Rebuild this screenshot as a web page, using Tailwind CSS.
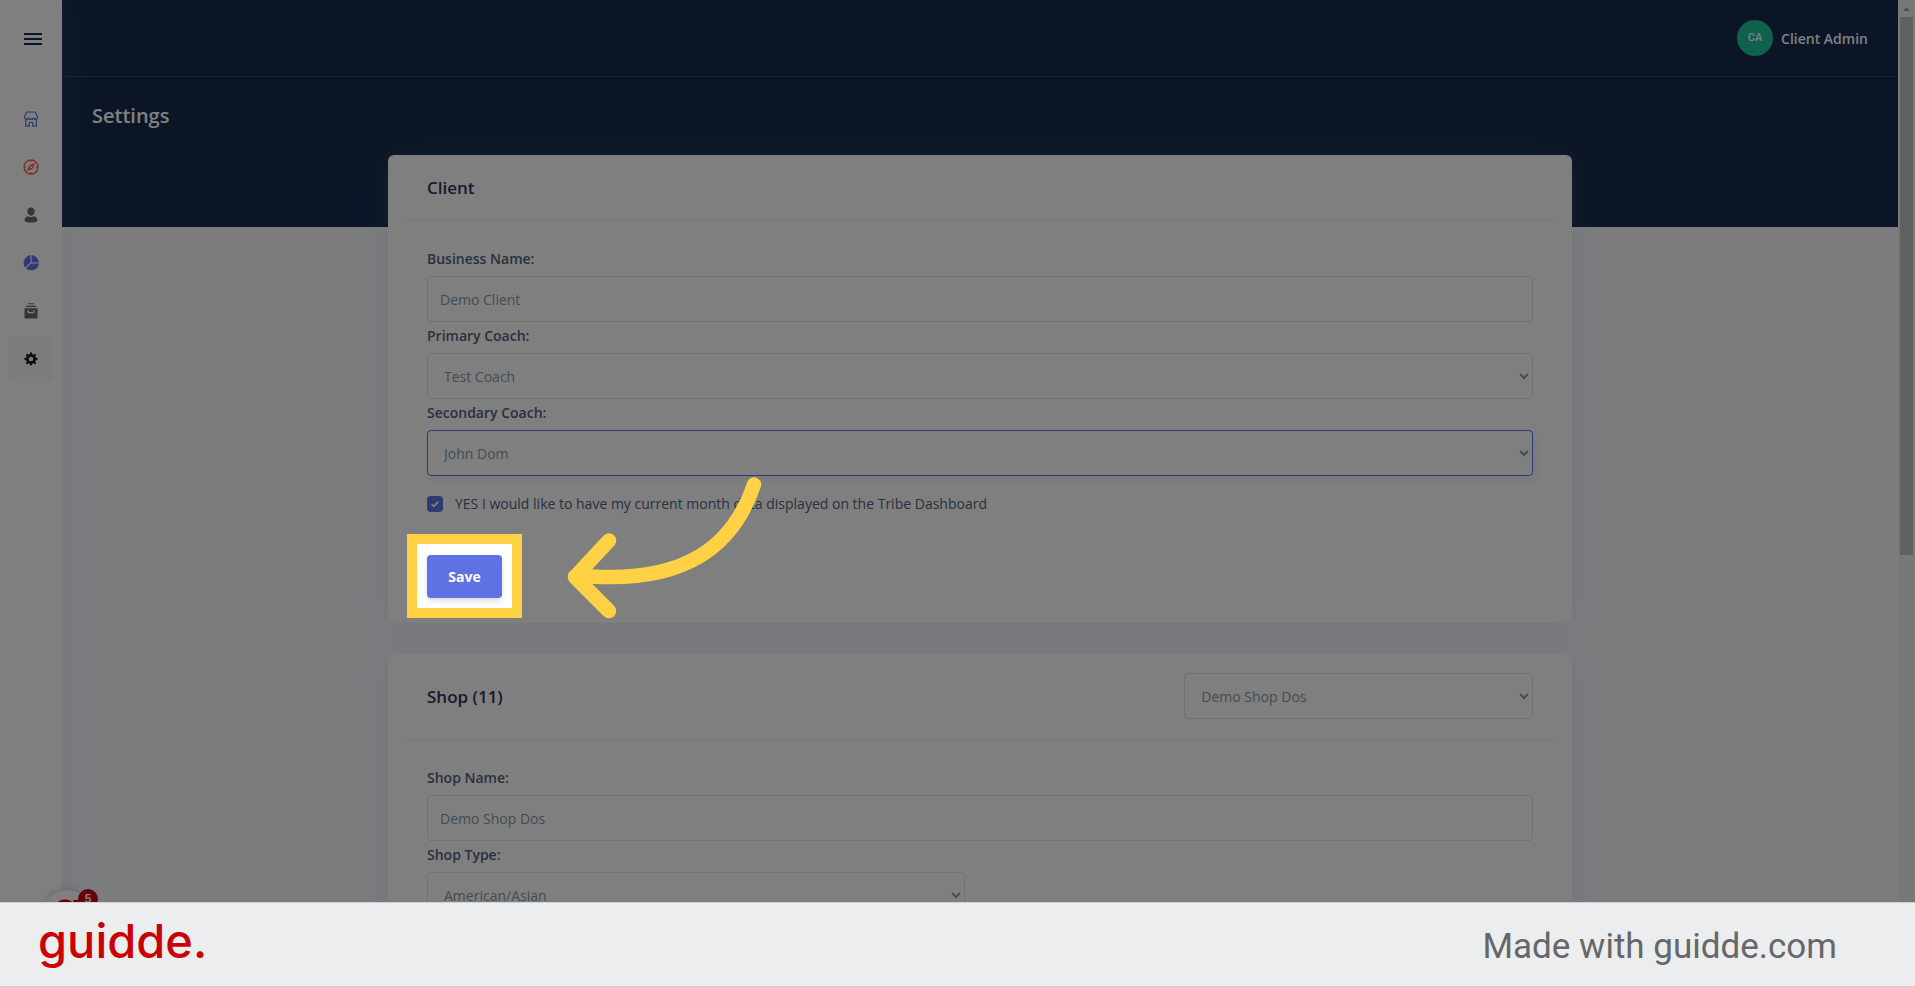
<!DOCTYPE html>
<html lang="en">
<head>
<meta charset="utf-8">
<meta name="viewport" content="width=device-width, initial-scale=1">
<title>Settings</title>
<script src="https://cdn.jsdelivr.net/npm/@tailwindcss/browser@4"></script>
</head>
<body class="relative h-screen overflow-hidden bg-[#f8f9fe] font-['Open_Sans',sans-serif] text-sm text-[#525f7f]">
<div class="flex h-full">

  <!-- Sidebar -->
  <nav aria-label="Main" class="z-10 flex w-[62px] shrink-0 flex-col bg-white px-2 shadow-[0_0_32px_0_rgba(136,152,170,0.15)]">
    <button type="button" aria-label="Toggle menu" class="mt-[33px] mb-[51px] ml-4 flex w-[18px] flex-col gap-[3px]">
      <span class="h-0.5 w-full bg-[#172b4d]"></span><span class="h-0.5 w-full bg-[#172b4d]"></span><span class="h-0.5 w-full bg-[#172b4d]"></span>
    </button>
    <div class="flex w-[46px] flex-col gap-0.5">
      <a href="#" aria-label="Shops" class="grid h-[46px] place-items-center rounded-md text-[#5e72e4]">
        <svg class="size-4" viewBox="0 0 16 16" fill="none" stroke="currentColor" stroke-width="1.2" stroke-linejoin="round"><path d="M3.700 1h8.600L14.400 5.500v1.200c0 1-.6 1.500-1.300 1.500s-1.300-.6-1.300-1.100c0 .5-.5 1.100-1.300 1.100s-1.200-.6-1.200-1.100c0 .5-.6 1.100-1.300 1.100s-1.300-.6-1.300-1.100c0 .5-.5 1.100-1.200 1.100s-1.300-.6-1.300-1.100c0 .5-.6 1.100-1.300 1.100s-1.300-.5-1.300-1.500V5.500z"/><path d="M2.700 8.200v6.900h3.600v-3.600h3.400v3.600h3.600V8.200"/></svg>
      </a>
      <a href="#" aria-label="Explore" class="grid h-[46px] place-items-center rounded-md text-[#fb6340]">
        <svg class="size-4" viewBox="0 0 16 16" fill="none" stroke="currentColor" stroke-width="1.3"><circle cx="8" cy="8" r="7"/><path d="M8 1v2M8 13v2M1 8h2M13 8h2"/><path fill="currentColor" fill-rule="evenodd" stroke="none" d="M12.300 3.700 9.700 9.700l-6 2.600 2.600-6zM8 7a1 1 0 1 0 0 2 1 1 0 0 0 0-2z"/></svg>
      </a>
      <a href="#" aria-label="Users" class="grid h-[46px] place-items-center rounded-md text-[#6a6a6a]">
        <svg class="size-4" viewBox="0 0 16 16" fill="currentColor"><path d="M8 .5c2.200 0 3.700 1.600 3.700 3.800S10.100 8.800 8 8.800 4.300 6.500 4.300 4.300 5.800.5 8 .5zM5.300 9.200c.8.6 1.700.9 2.700.9s1.900-.3 2.700-.9c2.300.4 3.700 1.900 3.700 4.100 0 1.500-2.800 2.300-6.400 2.300s-6.400-.8-6.400-2.300c0-2.200 1.400-3.700 3.700-4.100z"/></svg>
      </a>
      <a href="#" aria-label="Reports" class="grid h-[46px] place-items-center rounded-md text-[#5e72e4]">
        <svg class="size-4" viewBox="0 0 16 16" fill="currentColor"><path d="M7.400.1v7.400l-5.200 5.200A8 8 0 0 1 7.400.1zM8.600.1a8 8 0 0 1 7.300 7.300H8.600zM15.900 8.600A8 8 0 0 1 3 13.600l5-5z"/></svg>
      </a>
      <a href="#" aria-label="Archive" class="grid h-[46px] place-items-center rounded-md text-[#6a6a6a]">
        <svg class="size-4" viewBox="0 0 16 16" fill="currentColor"><path d="M5 .2h6v1.100H5zM3 2.700h10v1.200H3z"/><path fill-rule="evenodd" d="M1.500 5.200h13v9.600c0 .5-.3.800-.8.800H2.300c-.5 0-.8-.3-.8-.8zM4.500 7.100V9c0 .8.400 1.200 1.200 1.200h4.600c.8 0 1.200-.4 1.200-1.200V7.100h-1.300V9H5.800V7.100z"/></svg>
      </a>
      <a href="#" aria-label="Settings" aria-current="page" class="grid h-[46px] place-items-center rounded-md bg-[#f6f9fc] text-[#1c1c1c]">
        <svg class="size-[14px]" viewBox="0 0 16 16" fill="none" stroke="currentColor"><circle cx="8" cy="8" r="4.100" stroke-width="3"/><path stroke-width="2.600" stroke-linecap="round" d="M8 1.600v1.200M8 13.200v1.200M1.600 8h1.200M13.200 8h1.200M3.500 3.500l.8.8M11.700 11.700l.8.8M3.500 12.500l.8-.8M11.700 4.300l.8-.8"/></svg>
      </a>
    </div>
  </nav>

  <!-- Page -->
  <div class="min-w-0 flex-1">
    <header class="h-[227px] bg-[#172b4d]">
      <div class="flex h-[77px] items-center justify-end gap-2 border-b border-white/10 px-[30px]">
        <span class="grid size-9 place-items-center rounded-full bg-[#1fc29d] font-[Roboto,sans-serif] text-[11px] font-medium text-white">CA</span>
        <span class="pt-0.5 font-semibold text-white">Client Admin</span>
      </div>
      <h1 class="px-[30px] pt-6 text-xl leading-[30px] font-semibold text-white">Settings</h1>
    </header>

    <main class="-mt-[72px] px-[30px]">
      <div class="mx-auto flex w-2/3 flex-col gap-[30px]">
        <section class="rounded-md bg-white px-[15px] shadow-[0_0_32px_0_rgba(136,152,170,0.15)]">
          <div class="border-b border-black/5 px-6 py-5">
            <h2 class="text-[17px] leading-[25px] font-semibold text-[#32325d]">Client</h2>
          </div>
          <form class="px-6 pt-6 pb-[25px]" onsubmit="return false">
            <label for="business" class="mb-[3px] block leading-7 font-semibold">Business Name:</label>
            <input id="business" type="text" value="Demo Client" class="block h-[46px] w-full rounded border border-[#dee2e6] bg-white px-3 text-[#8898aa]">
            <label for="primary" class="mb-[3px] block leading-7 font-semibold">Primary Coach:</label>
            <select id="primary" class="block h-[46px] w-full rounded border border-[#dee2e6] bg-white px-3 text-[#8898aa]"><option>Test Coach</option></select>
            <label for="secondary" class="mb-[3px] block leading-7 font-semibold">Secondary Coach:</label>
            <select id="secondary" class="block h-[46px] w-full rounded border border-[#5e72e4] bg-white px-3 text-[#8898aa] shadow-[3px_4px_8px_rgba(94,114,228,0.1)]"><option>John Dom</option></select>
            <div class="mt-4 flex items-center gap-3">
              <span class="grid size-4 place-items-center">
                <input id="tribe" type="checkbox" checked class="col-start-1 row-start-1 size-4 appearance-none rounded bg-[#5e72e4]">
                <svg class="pointer-events-none col-start-1 row-start-1 size-2" viewBox="0 0 8 8" fill="none" stroke="#fff" stroke-width="1.800"><path d="M.7 4.200 2.900 6.300 7.300 1.700"/></svg>
              </span>
              <label for="tribe" class="leading-6">YES I would like to have my current month data displayed on the Tribe Dashboard</label>
            </div>
            <div class="relative mt-[39px] w-fit">
              <button type="submit" class="block h-[43px] w-[75px] rounded bg-[#5e72e4] font-bold text-white shadow-[0_4px_6px_rgba(50,50,93,0.11),0_1px_3px_rgba(0,0,0,0.08)]">Save</button>
              <!-- Spotlight: the shadow dims everything outside the frame -->
              <div class="pointer-events-none absolute -inset-x-5 -top-[21px] -bottom-5 z-40 border-10 border-[#ffd144] shadow-[0_0_0_2400px_rgba(0,0,0,0.5)]"></div>
              <svg class="pointer-events-none absolute -top-20 left-[135px] z-50 h-[150px] w-[210px]" viewBox="0 0 210 150" fill="none" stroke="#ffd144" stroke-width="14.500" stroke-linecap="round" stroke-linejoin="round"><path d="M192 9.500C171 72 123 107 30 101.500L13 101.500M47 65.500 13 102 47 136"/></svg>
            </div>
          </form>
        </section>

        <section class="rounded-md bg-white px-[15px] shadow-[0_0_32px_0_rgba(136,152,170,0.15)]">
          <div class="grid grid-cols-3 items-center gap-[30px] border-b border-black/5 px-6 py-5">
            <h2 class="col-span-2 text-[17px] leading-[25px] font-semibold text-[#32325d]">Shop (11)</h2>
            <select aria-label="Shop" class="h-[46px] w-full rounded border border-[#dee2e6] bg-white px-3 text-[#8898aa]"><option>Demo Shop Dos</option></select>
          </div>
          <form class="px-6 pt-6 pb-20" onsubmit="return false">
            <label for="shopname" class="mb-[3px] block leading-7 font-semibold">Shop Name:</label>
            <input id="shopname" type="text" value="Demo Shop Dos" class="block h-[46px] w-full rounded border border-[#dee2e6] bg-white px-3 text-[#8898aa]">
            <label for="shoptype" class="mb-[3px] block leading-7 font-semibold">Shop Type:</label>
            <div class="grid grid-cols-2 gap-[30px]">
              <select id="shoptype" class="h-[46px] w-full rounded border border-[#dee2e6] bg-white px-3 text-[#8898aa]"><option>American/Asian</option></select>
            </div>
          </form>
        </section>
      </div>
    </main>
  </div>

  <!-- Scrollbar -->
  <div aria-hidden="true" class="flex w-[17px] shrink-0 flex-col items-center bg-[#f1f1f1]">
    <svg class="h-[17px] w-[17px] shrink-0" viewBox="0 0 17 17" fill="#a3a3a3"><path d="M8.500 7 12 11H5z"/></svg>
    <div class="h-[54.5%] w-[13px] bg-[#c1c1c1]"></div>
  </div>
</div>

<!-- Help launcher -->
<button type="button" aria-label="Help, 5 new" class="absolute bottom-[49px] left-[43px] z-20 size-12 rounded-full bg-white shadow-[0_1px_8px_rgba(0,0,0,0.25)]">
  <svg class="absolute inset-0 size-12" viewBox="0 0 48 48" fill="none" stroke="#d00000" stroke-width="5"><circle cx="22" cy="21" r="9"/><path d="M33 10v22"/></svg>
  <span class="absolute -top-px left-[35px] grid size-5 place-items-center rounded-full bg-[#d0000f] font-['Liberation_Sans',sans-serif] text-xs font-bold text-white">5</span>
</button>

<!-- Banner -->
<footer class="absolute inset-x-0 bottom-0 z-50 flex h-[85px] items-center justify-between border-y border-[#cfd0d2] bg-[#ecedef] pr-[78px] pl-[38px]">
  <a href="#" class="pb-2 font-[Inter,sans-serif] text-[47px] leading-[56px] font-medium text-[#cb0000]">guidde.</a>
  <p class="pt-1 font-[Roboto,sans-serif] text-[35px] leading-10 text-[#666769]">Made with guidde.com</p>
</footer>
</body>
</html>
